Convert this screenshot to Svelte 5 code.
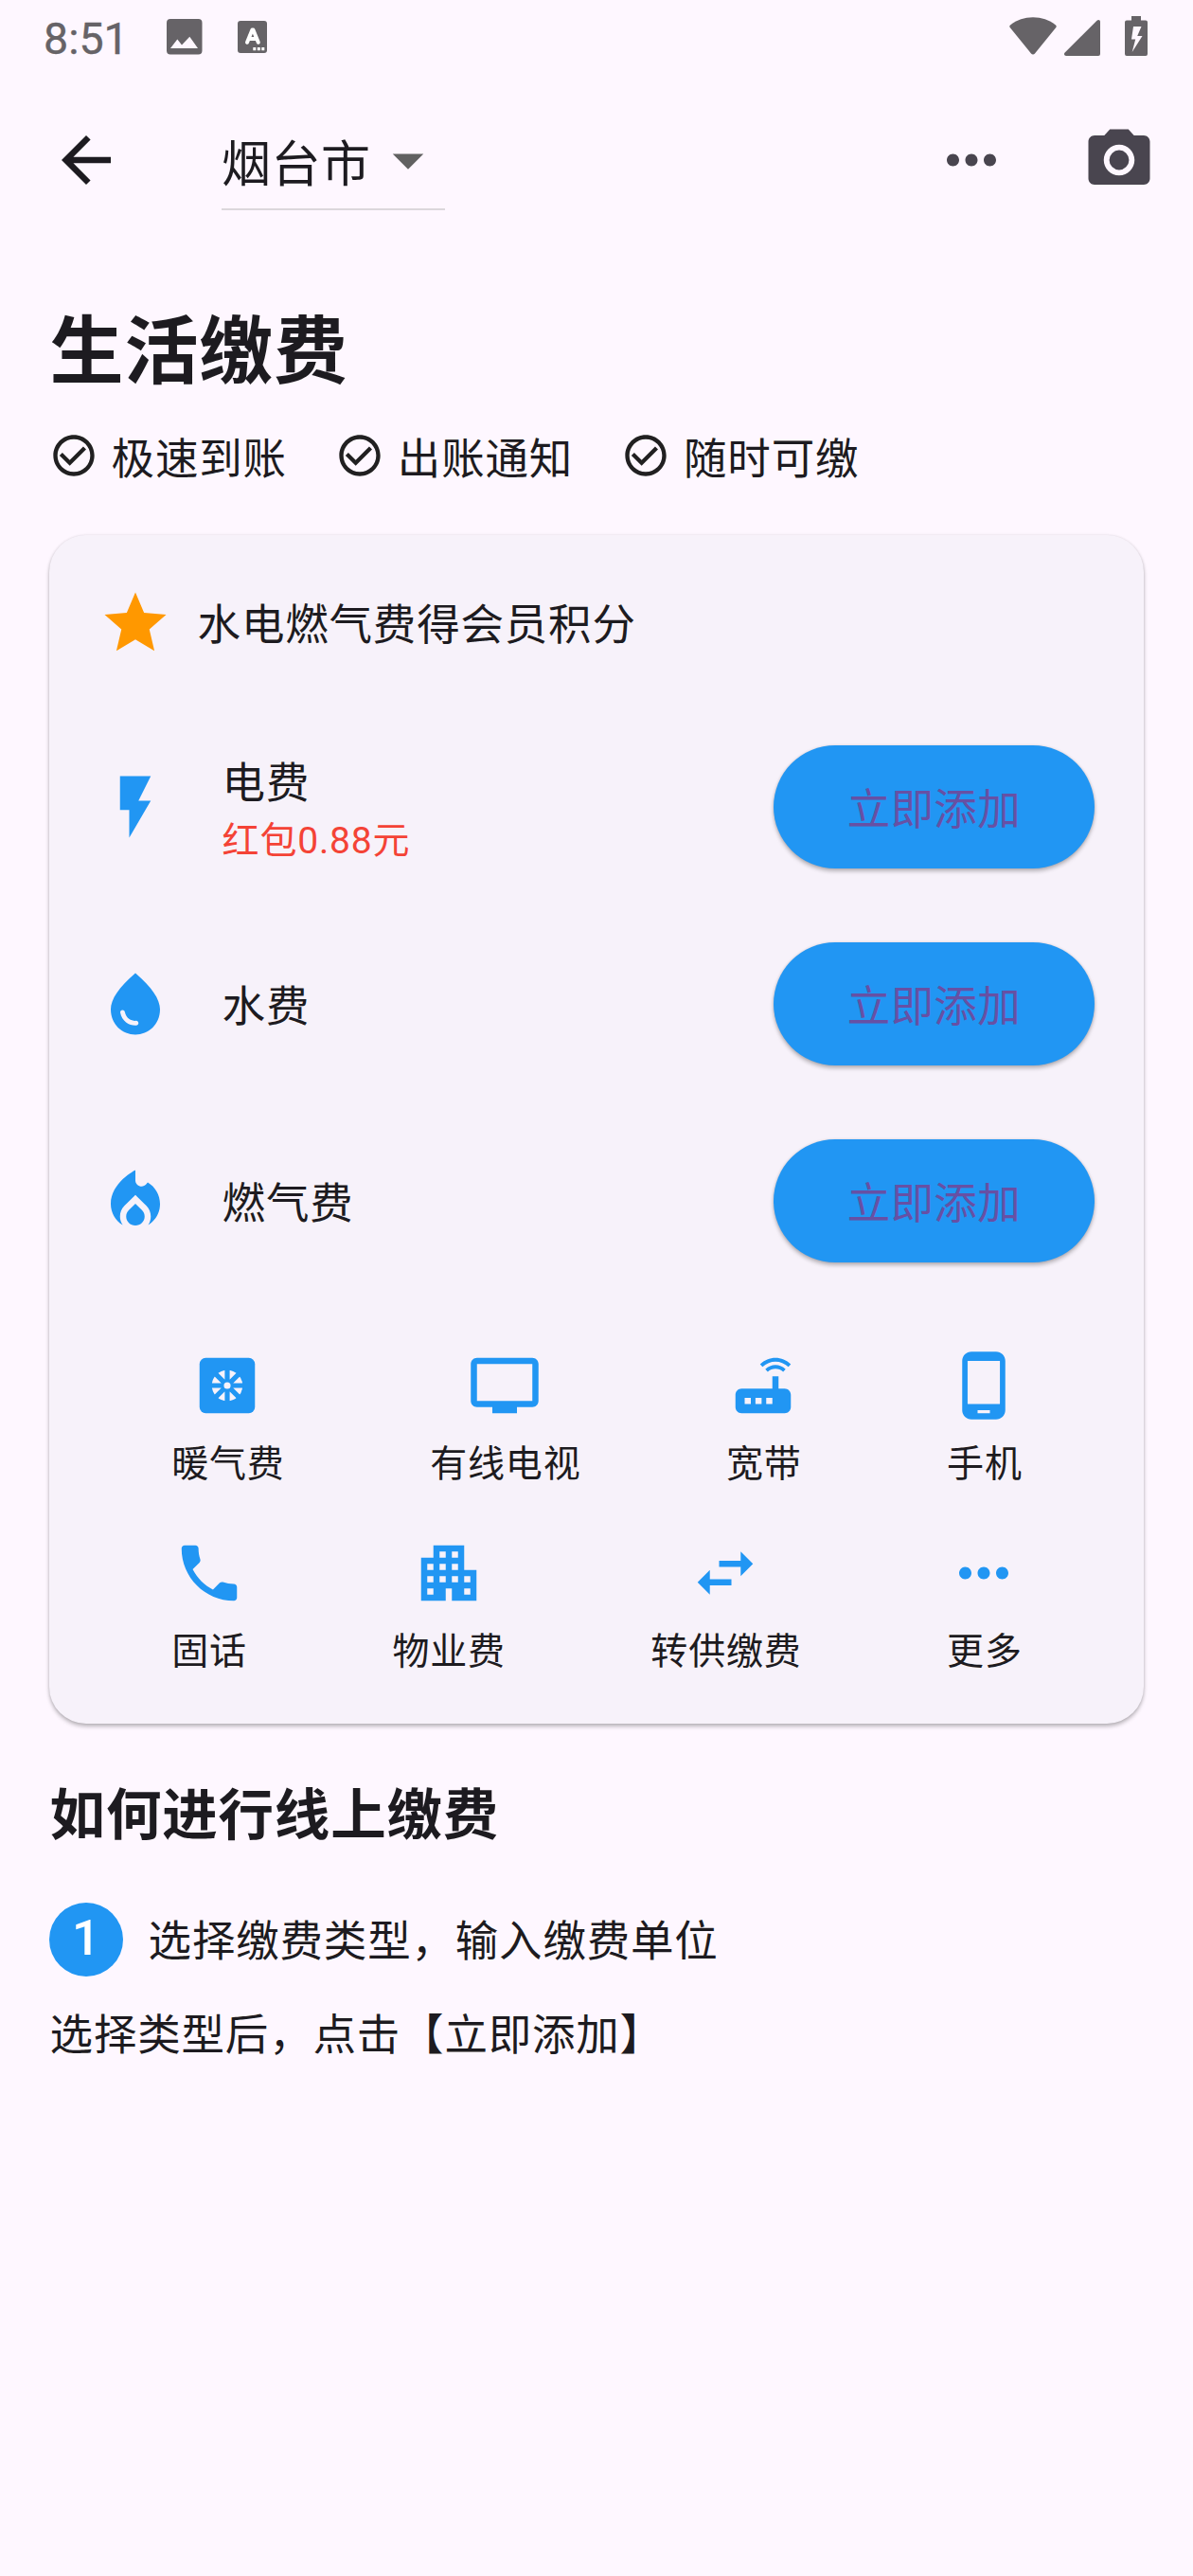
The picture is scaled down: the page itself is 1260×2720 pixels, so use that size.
<script>
  const icons = {
    back: 'M20 11H7.83l5.59-5.59L12 4l-8 8 8 8 1.41-1.41L7.83 13H20v-2z',
    drop: 'M7 10l5 5 5-5z',
    more: 'M6 10c-1.1 0-2 .9-2 2s.9 2 2 2 2-.9 2-2-.9-2-2-2zm12 0c-1.1 0-2 .9-2 2s.9 2 2 2 2-.9 2-2-.9-2-2-2zm-6 0c-1.1 0-2 .9-2 2s.9 2 2 2 2-.9 2-2-.9-2-2-2z',
    camera: 'M12 8.8a3.2 3.2 0 1 0 0 6.4 3.2 3.2 0 1 0 0-6.4zM9 2L7.17 4H4c-1.1 0-2 .9-2 2v12c0 1.1.9 2 2 2h16c1.1 0 2-.9 2-2V6c0-1.1-.9-2-2-2h-3.17L15 2H9zm3 15c-2.76 0-5-2.24-5-5s2.24-5 5-5 5 2.24 5 5-2.24 5-5 5z',
    check: 'M16.59 7.58L10 14.17l-3.59-3.58L5 12l5 5 8-8zM12 2C6.48 2 2 6.48 2 12s4.48 10 10 10 10-4.48 10-10S17.52 2 12 2zm0 18c-4.42 0-8-3.58-8-8s3.58-8 8-8 8 3.58 8 8-3.58 8-8 8z',
    star: 'M12 17.27L18.18 21l-1.64-7.03L22 9.24l-7.19-.61L12 2 9.19 8.63 2 9.24l5.46 4.73L5.82 21z',
    bolt: 'M7 2v11h3v9l7-12h-4l4-8z',
    water: 'M12 2c-5.33 4.55-8 8.48-8 11.8 0 4.98 3.8 8.2 8 8.2s8-3.22 8-8.2c0-3.32-2.67-7.25-8-11.8zM7.83 14c.37 0 .67.26.74.62.41 2.22 2.28 2.98 3.64 2.87.43-.02.79.32.79.75 0 .4-.32.73-.72.75-2.13.13-4.62-1.09-5.19-4.12-.08-.45.28-.87.74-.87z',
    fire: 'M12 12.9l-2.13 2.09C9.31 15.55 9 16.28 9 17.06 9 18.68 10.35 20 12 20s3-1.32 3-2.94c0-.78-.31-1.52-.87-2.07L12 12.9zM16 6l-.44.55C14.38 8.02 12 7.19 12 5.3V2S4 6 4 13c0 2.92 1.56 5.47 3.89 6.86-.56-.79-.89-1.76-.89-2.8 0-1.32.52-2.56 1.47-3.5L12 10.1l3.53 3.47c.95.93 1.47 2.17 1.47 3.5 0 1.02-.31 1.96-.85 2.75 1.89-1.15 3.29-3.06 3.71-5.3.66-3.55-1.07-6.9-3.86-8.52z',
    tv: 'M21 3H3c-1.1 0-2 .9-2 2v12c0 1.1.9 2 2 2h5v2h8v-2h5c1.1 0 1.99-.9 1.99-2L23 5c0-1.1-.9-2-2-2zm0 14H3V5h18v12z',
    router: 'M20.2 5.9l.8-.8C19.6 3.7 17.8 3 16 3s-3.6.7-5 2.1l.8.8C13 4.8 14.5 4.2 16 4.2s3 .6 4.2 1.7zm-.9.8c-.9-.9-2.1-1.4-3.3-1.4s-2.4.5-3.3 1.4l.8.8c.7-.7 1.6-1 2.5-1 .9 0 1.8.3 2.5 1l.8-.8zM19 13h-2V9h-2v4H5c-1.1 0-2 .9-2 2v4c0 1.1.9 2 2 2h14c1.1 0 2-.9 2-2v-4c0-1.1-.9-2-2-2zM8 18H6v-2h2v2zm3.5 0h-2v-2h2v2zm3.5 0h-2v-2h2v2z',
    mobile: 'M16 1H8C6.34 1 5 2.34 5 4v16c0 1.66 1.34 3 3 3h8c1.66 0 3-1.34 3-3V4c0-1.66-1.34-3-3-3zm-2 20h-4v-1h4v1zm3.25-3H6.75V4h10.5v14z',
    phone: 'M6.62 10.79c1.44 2.83 3.76 5.14 6.59 6.59l2.2-2.2c.27-.27.67-.36 1.02-.24 1.12.37 2.33.57 3.57.57.55 0 1 .45 1 1V20c0 .55-.45 1-1 1-9.39 0-17-7.61-17-17 0-.55.45-1 1-1h3.5c.55 0 1 .45 1 1 0 1.25.2 2.45.57 3.57.11.35.03.74-.25 1.02l-2.2 2.2z',
    building: 'M17 11V3H7v4H3v14h8v-4h2v4h8V11h-4zM7 19H5v-2h2v2zm0-4H5v-2h2v2zm0-4H5V9h2v2zm4 4H9v-2h2v2zm0-4H9V9h2v2zm0-4H9V5h2v2zm4 8h-2v-2h2v2zm0-4h-2V9h2v2zm0-4h-2V5h2v2zm4 12h-2v-2h2v2zm0-4h-2v-2h2v2z',
    swap: 'M6.99 11L3 15l3.99 4v-3H14v-2H6.99v-3zM21 9l-3.99-4v3H10v2h7.01v3L21 9z'
  };

  const perks = ['极速到账', '出账通知', '随时可缴'];
  const bills = [
    { icon: 'bolt', name: '电费', note: '红包0.88元' },
    { icon: 'water', name: '水费' },
    { icon: 'fire', name: '燃气费' }
  ];
  const services = [
    [
      { icon: 'fan', name: '暖气费' },
      { icon: 'tv', name: '有线电视' },
      { icon: 'router', name: '宽带' },
      { icon: 'mobile', name: '手机' }
    ],
    [
      { icon: 'phone', name: '固话' },
      { icon: 'building', name: '物业费' },
      { icon: 'swap', name: '转供缴费' },
      { icon: 'more', name: '更多' }
    ]
  ];
</script>

{#snippet icon(name)}
  <svg class="icon" viewBox="0 0 24 24" aria-hidden="true">
    {#if name === 'fan'}
      <rect x="3" y="3" width="18" height="18" rx="2" />
      <circle class="hole" cx="12" cy="12" r="5" />
      <path class="spokes" d="M12 6.5v11M6.5 12h11M8.1 8.1l7.8 7.8M15.9 8.1l-7.8 7.8" />
      <circle class="hole" cx="12" cy="12" r="1.1" />
    {:else}
      <path d={icons[name]} />
    {/if}
  </svg>
{/snippet}

<div class="screen">
  <div class="status">
    <span class="clock">8:51</span>
    <svg class="picture" viewBox="0 0 37.5 37.5" aria-hidden="true">
      <path fill-rule="evenodd" d="M4 0h29.500a4 4 0 0 1 4 4v29.500a4 4 0 0 1-4 4H4a4 4 0 0 1-4-4V4a4 4 0 0 1 4-4zM4 31h29L24.300 18.800l-8.300 8.700-4.700-6z" />
    </svg>
    <svg class="keyboard" viewBox="0 0 31 34" aria-hidden="true">
      <rect width="31" height="34" rx="3" />
      <path class="mark" d="M10 22.800L15.400 9.500h1L21.800 22.800M12 19h8" />
      <path class="dots" d="M16.300 28h3v3.300h-3zM20.800 28h3v3.300h-3zM25.300 28h3v3.300h-3z" />
    </svg>
    <span class="grow"></span>
    <svg class="wifi" viewBox="0 0 50 40" aria-hidden="true">
      <path d="M1 8.500C8 3 16 .3 25 .3S42 3 49 8.500c.8.700.9 1.800.3 2.600L27 38.500c-1.200 1.400-2.800 1.400-4 0L.7 11.100C.1 10.300.2 9.200 1 8.500z" />
    </svg>
    <svg class="signal" viewBox="0 0 38 38" aria-hidden="true">
      <path d="M38 2v34a2 2 0 0 1-2 2H2c-2 0-2.700-2-1.300-3.400L34.500.8C36-.6 38 0 38 2z" />
    </svg>
    <svg class="battery" viewBox="0 0 24 42" aria-hidden="true">
      <path fill-rule="evenodd" d="M7 0h10v4.500h5a2 2 0 0 1 2 2V40a2 2 0 0 1-2 2H2a2 2 0 0 1-2-2V6.500a2 2 0 0 1 2-2h5zM9 11L7 24.500h4.200L7.700 38 18.500 21h-5.300L17.500 11z" />
    </svg>
  </div>

  <header class="bar">
    {@render icon('back')}
    <div class="city">
      <span>烟台市</span>
      {@render icon('drop')}
    </div>
    <span class="grow"></span>
    <div class="actions">
      {@render icon('more')}
      {@render icon('camera')}
    </div>
  </header>

  <main>
    <h1>生活缴费</h1>
    <ul class="perks">
      {#each perks as perk}
        <li>{@render icon('check')}<span>{perk}</span></li>
      {/each}
    </ul>

    <section class="card">
      <div class="promo">
        {@render icon('star')}
        <span>水电燃气费得会员积分</span>
      </div>
      {#each bills as bill}
        <div class="bill">
          {@render icon(bill.icon)}
          <div class="label">
            <span class="name">{bill.name}</span>
            {#if bill.note}<span class="note">{bill.note}</span>{/if}
          </div>
          <button><span>立即添加</span></button>
        </div>
      {/each}
      <div class="services">
        {#each services as row}
          <div class="row">
            {#each row as service}
              <div class="service">
                {@render icon(service.icon)}
                <span>{service.name}</span>
              </div>
            {/each}
          </div>
        {/each}
      </div>
    </section>

    <h2>如何进行线上缴费</h2>
    <div class="step">
      <span class="number">1</span>
      <span class="text">选择缴费类型，输入缴费单位</span>
    </div>
    <p>选择类型后，点击【立即添加】</p>
  </main>
</div>

<style>
  :global(body) {
    margin: 0;
    background: #fef7ff;
  }
  .screen {
    width: 1260px;
    height: 2720px;
    box-sizing: border-box;
    overflow: hidden;
    background: #fef7ff;
    color: #1d1b20;
    font-family: Roboto, 'Noto Sans CJK SC', sans-serif;
    font-size: 45.5px;
    line-height: 65px;
    letter-spacing: 0.81px;
    white-space: nowrap;
  }
  svg {
    display: block;
    flex: none;
    fill: currentColor;
  }
  .icon {
    width: 78px;
    height: 78px;
  }
  .grow {
    flex: 1;
  }

  .status {
    display: flex;
    align-items: flex-start;
    height: 78px;
    box-sizing: border-box;
    padding: 17px 48px 0 46px;
    color: #666367;
  }
  .clock {
    width: 130.3px;
    font-size: 46.5px;
    line-height: 48px;
    letter-spacing: 0;
    -webkit-text-stroke: 0.4px currentColor;
  }
  .picture {
    width: 37.5px;
    height: 37.5px;
    margin-top: 3.3px;
  }
  .keyboard {
    width: 31px;
    height: 34px;
    margin: 5px 0 0 37.7px;
  }
  .mark {
    fill: none;
    stroke: #fff;
    stroke-width: 4;
    stroke-linejoin: round;
    stroke-linecap: round;
  }
  .dots {
    fill: #fff;
  }
  .wifi {
    width: 50px;
    height: 40px;
    margin-top: 1px;
  }
  .signal {
    width: 38px;
    height: 38px;
    margin: 4px 26px 0 8.5px;
  }
  .battery {
    width: 24px;
    height: 42px;
  }

  .bar {
    display: flex;
    align-items: center;
    height: 182px;
    padding: 0 39px 0 52px;
  }
  .city {
    display: flex;
    align-items: center;
    height: 104px;
    width: 236px;
    justify-content: space-between;
    margin: 2px 0 0 104px;
    border-bottom: 2px solid #dcd7dc;
    box-sizing: border-box;
    font-size: 52px;
    letter-spacing: 0.5px;
  }
  .city span {
    padding-top: 10px;
  }
  .actions {
    display: flex;
    gap: 78px;
    color: #49454f;
  }
  .city .icon {
    color: #616161;
  }

  main {
    padding: 0 52px;
    text-indent: 0.6px;
  }
  h1 {
    margin: 0;
    padding-top: 56px;
    font-size: 78px;
    line-height: 113px;
    font-weight: 700;
  }
  .perks {
    display: flex;
    gap: 51.4px;
    margin: 0;
    padding: 23px 0 0;
    list-style: none;
  }
  .perks li {
    display: flex;
    align-items: center;
    gap: 13px;
    height: 58px;
  }
  .perks .icon {
    width: 52px;
    height: 52px;
    color: #212021;
  }
  .perks span {
    padding-top: 8px;
  }

  .card {
    height: 1255px;
    box-sizing: border-box;
    margin-top: 55px;
    padding: 52.5px 52px 0;
    border-radius: 39px;
    background: #f7f2fa;
    box-shadow: 0 3px 4px rgba(0, 0, 0, 0.26), 0 0 3px rgba(0, 0, 0, 0.1);
  }
  .promo {
    display: flex;
    align-items: center;
    gap: 26px;
    height: 80px;
    margin-bottom: 50px;
  }
  .promo .icon {
    color: #ff9800;
  }
  .promo span {
    padding-top: 6px;
  }
  .bill {
    display: flex;
    align-items: center;
    height: 208px;
  }
  .bill .icon,
  .service .icon {
    color: #2196f3;
  }
  .label {
    display: flex;
    flex-direction: column;
    flex: 1;
    margin-left: 52px;
    padding-top: 7px;
  }
  .note {
    font-size: 39px;
    line-height: 56px;
    color: #f44336;
  }
  button {
    height: 130px;
    padding: 8px 78px 0;
    border: 0;
    border-radius: 65px;
    background: #2196f3;
    box-shadow: 0 3px 4px rgba(0, 0, 0, 0.26), 0 0 3px rgba(0, 0, 0, 0.12);
    color: #6750a4;
    font: inherit;
    letter-spacing: 0.33px;
  }
  .services {
    display: flex;
    flex-direction: column;
    gap: 36px;
    padding-top: 52.5px;
  }
  .row {
    display: flex;
    justify-content: space-around;
  }
  .service {
    display: flex;
    flex-direction: column;
    align-items: center;
    gap: 19px;
    height: 162px;
    font-size: 39px;
    line-height: 51px;
    text-indent: 1px;
  }
  .hole {
    fill: #f7f2fa;
  }
  .spokes {
    fill: none;
    stroke: currentColor;
    stroke-width: 1.6;
  }

  h2 {
    margin: 0;
    padding-top: 55px;
    font-size: 58.5px;
    line-height: 84px;
    font-weight: 700;
  }
  .step {
    display: flex;
    align-items: center;
    gap: 26px;
    height: 78px;
    padding-top: 49.5px;
  }
  .number {
    width: 78px;
    height: 78px;
    border-radius: 50%;
    background: #2196f3;
    color: #fff;
    font-size: 52px;
    line-height: 76px;
    font-weight: 500;
    text-align: center;
  }
  .text {
    padding-top: 6px;
  }
  p {
    margin: 0;
    padding-top: 30.5px;
  }
</style>
